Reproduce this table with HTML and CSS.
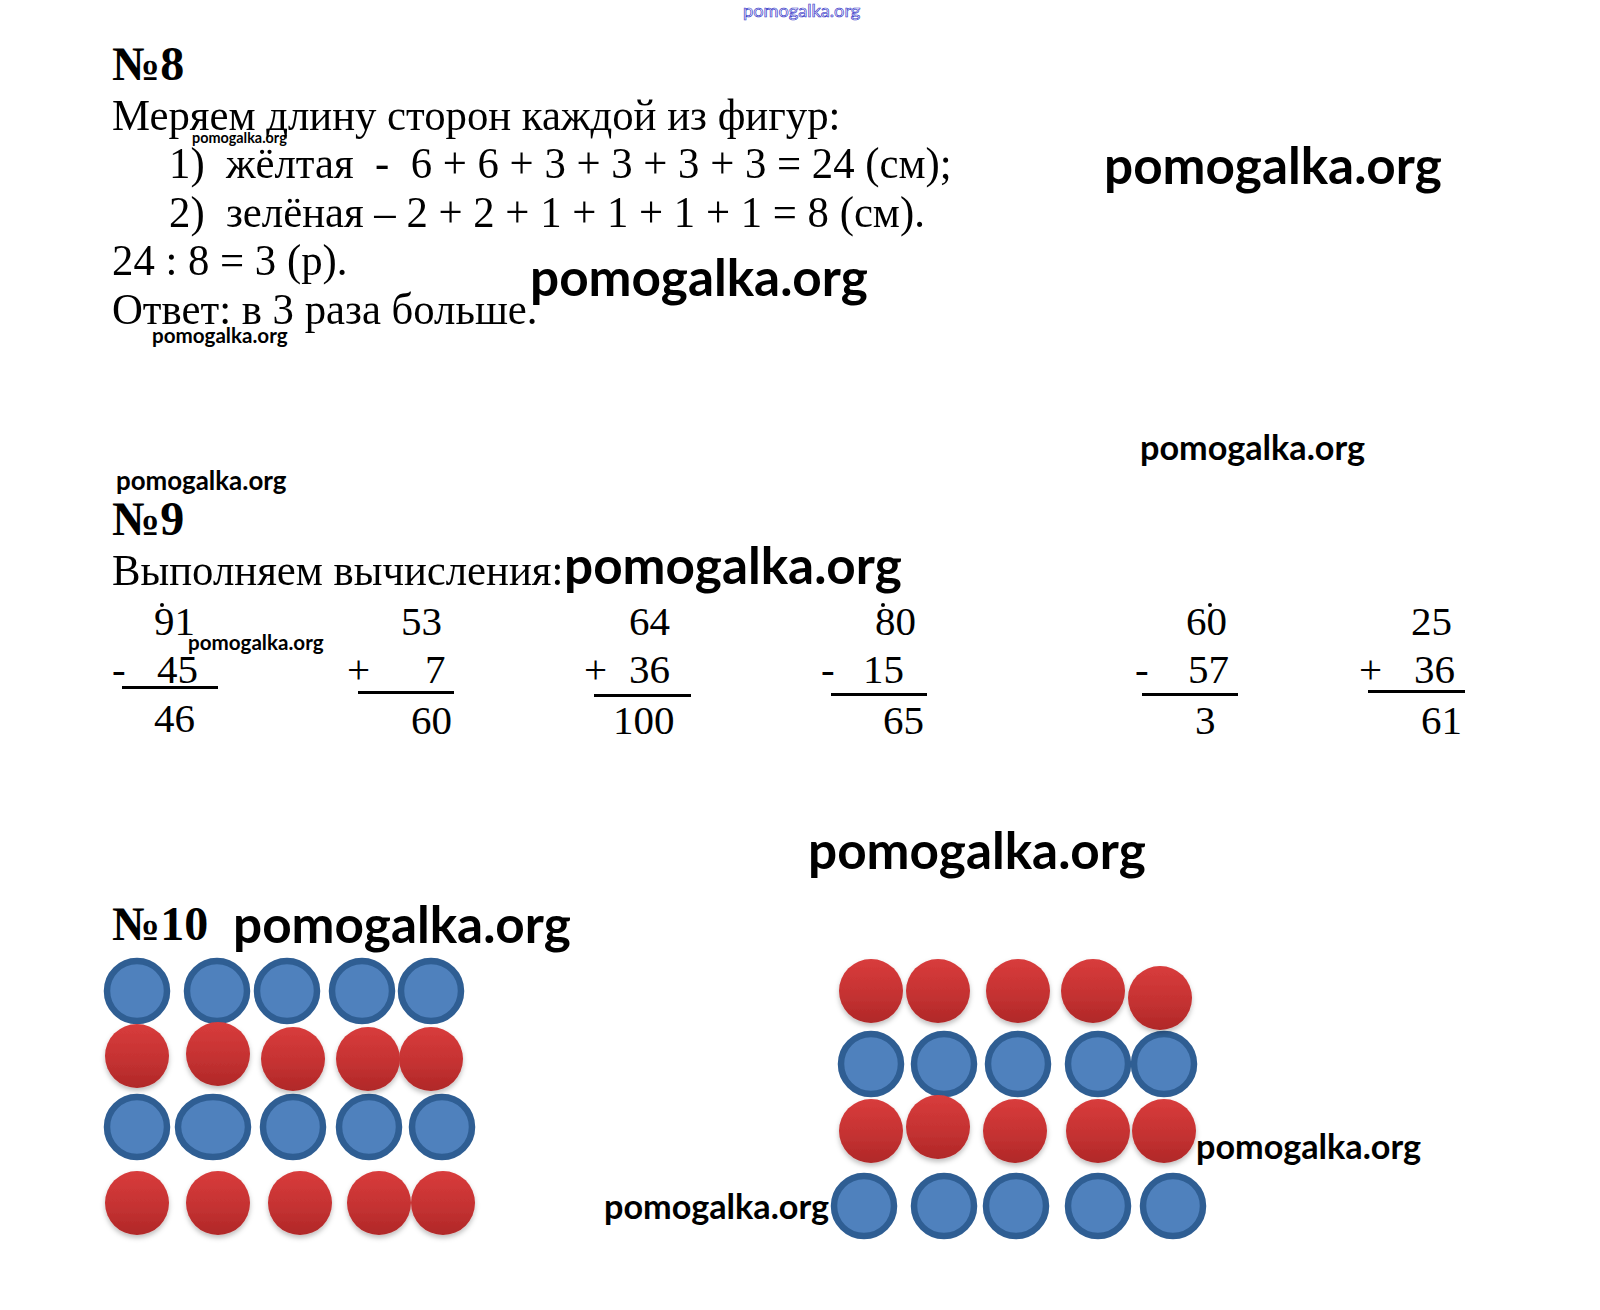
FILE: index.html
```html
<!DOCTYPE html>
<html lang="ru">
<head>
<meta charset="utf-8">
<title>№8 – №10</title>
<link rel="stylesheet" href="styles.css">
</head>
<body>
<div class="page">
  <section class="task t8">
    <h2 class="num">№8</h2>
    <p class="line">Меряем длину сторон каждой из фигур:</p>
    <p class="line indent">1)  жёлтая  -  6 + 6 + 3 + 3 + 3 + 3 = 24 (см);</p>
    <p class="line indent">2)  зелёная – 2 + 2 + 1 + 1 + 1 + 1 = 8 (см).</p>
    <p class="line">24 : 8 = 3 (р).</p>
    <p class="line">Ответ: в 3 раза больше.</p>
  </section>

  <section class="task t9">
    <h2 class="num">№9</h2>
    <p class="line">Выполняем вычисления:</p>
    <div class="sums">
      <div class="col c1">
        <div class="r1"><span class="dot">9</span>1</div>
        <div class="r2"><span class="sign">-</span>45</div>
        <div class="bar"></div>
        <div class="r3">46</div>
      </div>
      <div class="col c2">
        <div class="r1">53</div>
        <div class="r2"><span class="sign">+</span>7</div>
        <div class="bar"></div>
        <div class="r3">60</div>
      </div>
      <div class="col c3">
        <div class="r1">64</div>
        <div class="r2"><span class="sign">+</span>36</div>
        <div class="bar"></div>
        <div class="r3">100</div>
      </div>
      <div class="col c4">
        <div class="r1"><span class="dot">8</span>0</div>
        <div class="r2"><span class="sign">-</span>15</div>
        <div class="bar"></div>
        <div class="r3">65</div>
      </div>
      <div class="col c5">
        <div class="r1">6<span class="dot dot-near">0</span></div>
        <div class="r2"><span class="sign">-</span>57</div>
        <div class="bar"></div>
        <div class="r3">3</div>
      </div>
      <div class="col c6">
        <div class="r1">25</div>
        <div class="r2"><span class="sign">+</span>36</div>
        <div class="bar"></div>
        <div class="r3">61</div>
      </div>
    </div>
  </section>

  <section class="task t10">
    <h2 class="num">№10</h2>
  </section>

  <svg class="chips" width="1600" height="361" viewBox="0 949 1600 361" xmlns="http://www.w3.org/2000/svg">
    <defs>
      <linearGradient id="red" x1="0" y1="0" x2="0" y2="1">
        <stop offset="0" stop-color="#d83c3c"/>
        <stop offset="0.55" stop-color="#c53232"/>
        <stop offset="1" stop-color="#b02828"/>
      </linearGradient>
      <filter id="sh" x="-30%" y="-30%" width="160%" height="170%">
        <feDropShadow dx="0" dy="3" stdDeviation="2.5" flood-color="#000" flood-opacity="0.25"/>
      </filter>
    </defs>
    <g class="blue">
      <circle cx="137" cy="992" r="30"/>
      <circle cx="217" cy="992" r="30"/>
      <circle cx="287" cy="992" r="30"/>
      <circle cx="362" cy="992" r="30"/>
      <circle cx="431" cy="992" r="30"/>
      <circle cx="137" cy="1128" r="30"/>
      <ellipse cx="213" cy="1128" rx="35" ry="30"/>
      <circle cx="293" cy="1128" r="30"/>
      <circle cx="369" cy="1128" r="30"/>
      <circle cx="442" cy="1128" r="30"/>
      <circle cx="871" cy="1065" r="30"/>
      <circle cx="944" cy="1065" r="30"/>
      <circle cx="1018" cy="1065" r="30"/>
      <circle cx="1098" cy="1065" r="30"/>
      <circle cx="1164" cy="1065" r="30"/>
      <circle cx="864" cy="1207" r="30"/>
      <circle cx="944" cy="1207" r="30"/>
      <circle cx="1016" cy="1207" r="30"/>
      <circle cx="1098" cy="1207" r="30"/>
      <circle cx="1173" cy="1207" r="30"/>
    </g>
    <g class="red" filter="url(#sh)">
      <circle cx="137" cy="1057" r="32"/>
      <circle cx="218" cy="1055" r="32"/>
      <circle cx="293" cy="1060" r="32"/>
      <circle cx="368" cy="1060" r="32"/>
      <circle cx="431" cy="1060" r="32"/>
      <circle cx="137" cy="1204" r="32"/>
      <circle cx="218" cy="1204" r="32"/>
      <circle cx="300" cy="1204" r="32"/>
      <circle cx="379" cy="1204" r="32"/>
      <circle cx="443" cy="1204" r="32"/>
      <circle cx="871" cy="992" r="32"/>
      <circle cx="938" cy="992" r="32"/>
      <circle cx="1018" cy="992" r="32"/>
      <circle cx="1093" cy="992" r="32"/>
      <circle cx="1160" cy="999" r="32"/>
      <circle cx="871" cy="1132" r="32"/>
      <circle cx="938" cy="1128" r="32"/>
      <circle cx="1015" cy="1132" r="32"/>
      <circle cx="1098" cy="1132" r="32"/>
      <circle cx="1164" cy="1132" r="32"/>
    </g>
  </svg>

  <div class="wm wm-top">pomogalka.org</div>
  <div class="wm xl wm-a">pomogalka.org</div>
  <div class="wm xl wm-b">pomogalka.org</div>
  <div class="wm xl wm-c">pomogalka.org</div>
  <div class="wm xl wm-d">pomogalka.org</div>
  <div class="wm xl wm-e">pomogalka.org</div>
  <div class="wm lg wm-f">pomogalka.org</div>
  <div class="wm lg wm-g">pomogalka.org</div>
  <div class="wm lg wm-h">pomogalka.org</div>
  <div class="wm md wm-i">pomogalka.org</div>
  <div class="wm sm wm-j">pomogalka.org</div>
  <div class="wm sm wm-k">pomogalka.org</div>
  <div class="wm xs wm-l">pomogalka.org</div>
</div>
</body>
</html>
```

FILE: styles.css
```css
* { box-sizing: border-box; }

body {
  margin: 0;
  background: #fff;
  color: #000;
  font-family: "Liberation Serif", "Times New Roman", serif;
}

.page {
  position: relative;
  width: 1600px;
  height: 1310px;
  overflow: hidden;
}

.task { padding-left: 112px; }

.num {
  margin: 0;
  font-size: 48px;
  line-height: 48px;
  font-weight: bold;
}

.line {
  margin: 0;
  font-size: 45px;
  line-height: 48.5px;
  white-space: pre;
  transform: scaleX(0.95);
  transform-origin: 0 50%;
}

.t8 { padding-top: 40px; }
.t8 .num + .line { margin-top: 2.5px; }
.indent { padding-left: 60px; }

.t9 { margin-top: 162px; }
.t9 .num + .line { margin-top: 2.5px; }

.sums {
  display: grid;
  grid-template-columns: 235px 237px 237px 314px 224px 130px;
  margin-top: 1px;
  font-size: 41px;
}

.col { white-space: nowrap; }
.c1 { --a: 42px; --b: 45px; --c: 42px; --l: 10px; --w: 96px; --bt: -5px; }
.c2 { --a: 54px; --b: 78px; --c: 64px; --l: 11px; --w: 96px; --bt: 0px; }
.c3 { --a: 45px; --b: 45px; --c: 29px; --l: 10px; --w: 97px; --bt: 3px; }
.c4 { --a: 54px; --b: 42px; --c: 62px; --l: 10px; --w: 96px; --bt: 2px; }
.c5 { --a: 51px; --b: 53px; --c: 60px; --l: 7px;  --w: 96px; --bt: 2px; }
.c6 { --a: 52px; --b: 55px; --c: 62px; --l: 9px;  --w: 97px; --bt: -1px; }

.r1 { line-height: 52px; padding-left: var(--a); }
.r2 { line-height: 44px; }
.sign { display: inline-block; width: var(--b); }
.bar {
  height: 3px;
  background: #000;
  margin-left: var(--l);
  width: var(--w);
  margin-top: var(--bt);
  margin-bottom: calc(-3px - var(--bt));
}
.r3 { line-height: 44px; margin-top: 7px; padding-left: var(--c); }

.dot { position: relative; }
.dot::after {
  content: "";
  position: absolute;
  left: 6px;
  top: 5px;
  width: 4px;
  height: 4px;
  border-radius: 50%;
  background: #000;
}
.dot-near::after { left: 1px; }

.t10 { margin-top: 158px; }

.chips { display: block; }
.chips .blue circle,
.chips .blue ellipse {
  fill: #4f81bd;
  stroke: #2f5e93;
  stroke-width: 6.5;
}
.chips .red circle { fill: url(#red); }

/* watermarks lying over the page */
.wm {
  position: absolute;
  font-family: Lato, "Open Sans", sans-serif;
  font-weight: bold;
  line-height: 1;
  white-space: nowrap;
  color: #000;
}
.xl { font-size: 51.3px; }
.lg { font-size: 34.2px; }
.md { font-size: 25.9px; }
.sm { font-size: 20.6px; }
.xs { font-size: 14.4px; }

.wm-top {
  left: 743px;
  top: 1px;
  font-size: 18.2px;
  font-weight: normal;
  color: transparent;
  -webkit-text-stroke: 0.7px #3535c8;
}
.wm-a { left: 530px; top: 251px; }
.wm-b { left: 1104px; top: 139px; }
.wm-c { left: 564px; top: 539px; }
.wm-d { left: 808px; top: 824px; }
.wm-e { left: 233px; top: 898px; }
.wm-f { left: 1140px; top: 430px; }
.wm-g { left: 604px; top: 1189px; }
.wm-h { left: 1196px; top: 1129px; }
.wm-i { left: 116px; top: 468px; }
.wm-j { left: 152px; top: 325px; }
.wm-k { left: 188px; top: 632px; }
.wm-l { left: 192px; top: 131px; }
```
